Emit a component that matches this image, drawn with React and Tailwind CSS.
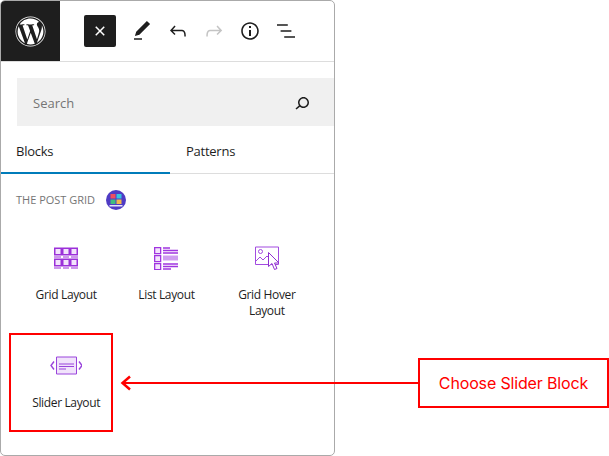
import React from 'react';
import { FaWordpress } from 'react-icons/fa';

const Icon = ({ d, className = 'text-[#1e1e1e]' }) => (
    <svg viewBox="0 0 24 24" width="24" height="24" fill="currentColor" className={className}>
        <path d={d} />
    </svg>
);

const GridIcon = () => (
    <svg width="24" height="24" viewBox="0 0 24 24" fill="none" stroke="#9b30d9" strokeWidth="1.5">
        <path fill="#f3e3fc" d="M.75 2.250h6.500v6.500h-6.500zM8.750 2.250h6.500v6.500h-6.500zM16.750 2.250h6.500v6.500h-6.500zM.75 13.250h6.500v6.500h-6.500zM8.750 13.250h6.500v6.500h-6.500zM16.750 13.250h6.500v6.500h-6.500z" />
        <path d="M0 11h7M9 11h6M17 11h7M0 22h7M9 22h6M17 22h7" strokeWidth="1.2" />
    </svg>
);

const ListIcon = () => (
    <svg width="24" height="24" viewBox="0 0 24 24" fill="none" stroke="#a035e0" strokeWidth="1.3">
        <path fill="#f3e3fc" d="M.65 1.650h6v6h-6zM.65 9.650h6v6h-6zM.65 17.650h6v6h-6z" />
        <path fill="#cf9df0" stroke="none" d="M9 9.500h15v5H9z" />
        <path d="M9 2h7M9 4.500h15M9 7h15M9 18h15M9 20.500h15M9 23h8" />
    </svg>
);

const HoverIcon = () => (
    <svg width="24" height="24" viewBox="0 0 24 24" fill="none" stroke="#a24be0" strokeWidth="1">
        <path d="M.5 1h23v17.500H.5z" />
        <circle cx="5.500" cy="5.500" r="2" />
        <path d="M1 15l4-4 3 3 4-4 2 2" />
        <path fill="#fff" stroke="#8f2fd0" d="M13.500 6.500v14l3.500-3 2.500 6 2.500-1-2.500-5.500h4.500z" />
    </svg>
);

const SliderIcon = () => (
    <svg width="32" height="24" viewBox="0 0 32 24" fill="none" stroke="#9a45dc" strokeWidth="1">
        <path fill="#f1e3fb" d="M6.500 3h20v17h-20z" />
        <path d="M9 10h15M9 12.500h15M9 15h7" strokeWidth="1.200" />
        <path d="M4 7.500L1 11.500l3 4M29 7.500l3 4-3 4" strokeWidth="1.400" />
    </svg>
);

const PluginBadge = () => (
    <svg width="20" height="20" viewBox="0 0 20 20">
        <circle cx="10" cy="10" r="10" fill="#4f3bc4" />
        <rect x="4.500" y="4" width="5" height="4.500" fill="#ef4f5f" />
        <rect x="10.500" y="4" width="5" height="4.500" fill="#37c4e0" />
        <rect x="4.500" y="9.500" width="5" height="4.500" fill="#3fbf7f" />
        <rect x="10.500" y="9.500" width="5" height="4.500" fill="#f2b84a" />
        <rect x="3.500" y="15" width="13" height="1.500" fill="#e6e3fa" />
    </svg>
);

const Tile = ({ icon, label }) => (
    <div className="flex flex-col items-center h-[108px] pt-[16px]">
        <div className="h-[24px] flex items-center justify-center">{icon}</div>
        <div className="mt-[17px] w-[80px] text-center text-[12px] tracking-[-0.35px] leading-[16px] text-[#1e1e1e]">{label}</div>
    </div>
);

export default function App() {
    return (
        <div className="relative w-[609px] h-[456px] bg-white overflow-hidden font-['Open_Sans',sans-serif]">
            <div className="w-[335px] h-[456px] border border-[#aaaaaa] rounded-[5px] overflow-hidden flex flex-col">
                {/* Top toolbar */}
                <div className="h-[61px] shrink-0 flex items-center border-b border-[#dddddd]">
                    <div className="w-[59px] h-[60px] bg-[#1e1e1e] flex items-center justify-center text-white">
                        <FaWordpress size={31} />
                    </div>
                    <div className="ml-[24px] w-[32px] h-[32px] rounded-[2px] bg-[#1e1e1e] flex items-center justify-center">
                        <Icon className="text-white" d="M12 13.06l3.712 3.713 1.061-1.06L13.061 12l3.712-3.712-1.06-1.06L12 10.938 8.288 7.227l-1.061 1.06L10.939 12l-3.712 3.712 1.06 1.061L12 13.061z" />
                    </div>
                    <div className="ml-[14px] flex items-center gap-[12px]">
                        <Icon d="M20.1 5.1L16.9 2 6.2 12.7l-1.3 4.4 4.5-1.3L20.1 5.1zM4 20.8h8v-1.5H4v1.5z" />
                        <Icon d="M18.3 11.7c-.6-.6-1.4-.9-2.3-.9H6.7l2.9-3.3-1.1-1-4.5 5L8.5 16l1-1-2.7-2.7H16c.5 0 .9.2 1.3.5 1 1 1 3.4 1 4.5v.3h1.5v-.2c0-1.5 0-4.3-1.5-5.7z" />
                        <Icon className="text-[#c4c4c4]" d="M15.6 6.5l-1.1 1 2.9 3.3H8c-.9 0-1.7.3-2.3.9-1.4 1.5-1.4 4.2-1.4 5.6v.2h1.5v-.3c0-1.1 0-3.5 1-4.5.3-.3.7-.5 1.3-.5h9.2L14.5 15l1.1 1.1 4.6-4.6-4.6-5z" />
                        <Icon d="M12 3.2c-4.8 0-8.8 3.9-8.8 8.8 0 4.8 3.9 8.8 8.8 8.8 4.8 0 8.8-3.9 8.8-8.8 0-4.8-4-8.8-8.8-8.8zm0 16c-4 0-7.2-3.3-7.2-7.2C4.8 8 8 4.8 12 4.8s7.2 3.3 7.2 7.2c0 4-3.2 7.2-7.2 7.2zM11 17h2v-6h-2v6zm0-8h2V7h-2v2z" />
                        <Icon d="M13.8 5.2H3v1.5h10.8V5.2zm-3.6 12v1.5H21v-1.5H10.2zm7.2-6H6.6v1.5h10.8v-1.5z" />
                    </div>
                </div>

                {/* Search */}
                <div className="mt-[16px] ml-[16px] h-[48px] bg-[#f0f0f0] flex items-center justify-between pl-[16px] pr-[20px] shrink-0">
                    <span className="text-[13px] text-[#757575] mt-[3px]">Search</span>
                    <Icon className="text-[#1e1e1e] mt-[1px]" d="M13.5 6C10.5 6 8 8.5 8 11.5c0 1.1.3 2.1.9 3l-3.4 3 1 1.1 3.4-2.9c1 .9 2.2 1.4 3.6 1.4 3 0 5.5-2.5 5.5-5.5C19 8.5 16.5 6 13.5 6zm0 9.5c-2.2 0-4-1.8-4-4s1.8-4 4-4 4 1.8 4 4-1.8 4-4 4z" />
                </div>

                {/* Tabs */}
                <div className="mt-[4px] h-[44px] shrink-0 flex border-b border-[#dddddd] text-[13px] tracking-[-0.25px] font-medium text-[#1e1e1e]">
                    <div className="w-[169px] h-[44px] pl-[15px] pt-[2px] flex items-center border-b-2 border-[#007cba]">Blocks</div>
                    <div className="pl-[16px] h-[43px] flex items-center">Patterns</div>
                </div>

                {/* Block category */}
                <div className="mt-[16px] ml-[15px] h-[20px] flex items-center gap-[11px]">
                    <span className="text-[11px] font-medium uppercase text-[#757575]">The Post Grid</span>
                    <PluginBadge />
                </div>
                <div className="mt-[20px] ml-[15px] mr-[17px] grid grid-cols-3">
                    <Tile icon={<GridIcon />} label="Grid Layout" />
                    <Tile icon={<ListIcon />} label="List Layout" />
                    <Tile icon={<HoverIcon />} label="Grid Hover Layout" />
                    <Tile icon={<SliderIcon />} label="Slider Layout" />
                </div>
            </div>

            {/* Annotation */}
            <div className="absolute left-[9px] top-[333px] w-[104px] h-[99px] border-2 border-[#ff0000]" />
            <svg className="absolute left-[120px] top-[373px]" width="300" height="20" viewBox="0 0 300 20" fill="none" stroke="#ff0000" strokeWidth="2">
                <path d="M3 10h297" />
                <path d="M10 3.500L2.500 10l7.500 6.500" strokeWidth="2.500" />
            </svg>
            <div className="absolute left-[418px] top-[358px] w-[191px] h-[50px] border-2 border-[#ff0000] flex items-center justify-center text-[16px] tracking-[-0.15px] text-[#ff0000] font-['Inter',sans-serif]">
                Choose Slider Block
            </div>
        </div>
    );
}
